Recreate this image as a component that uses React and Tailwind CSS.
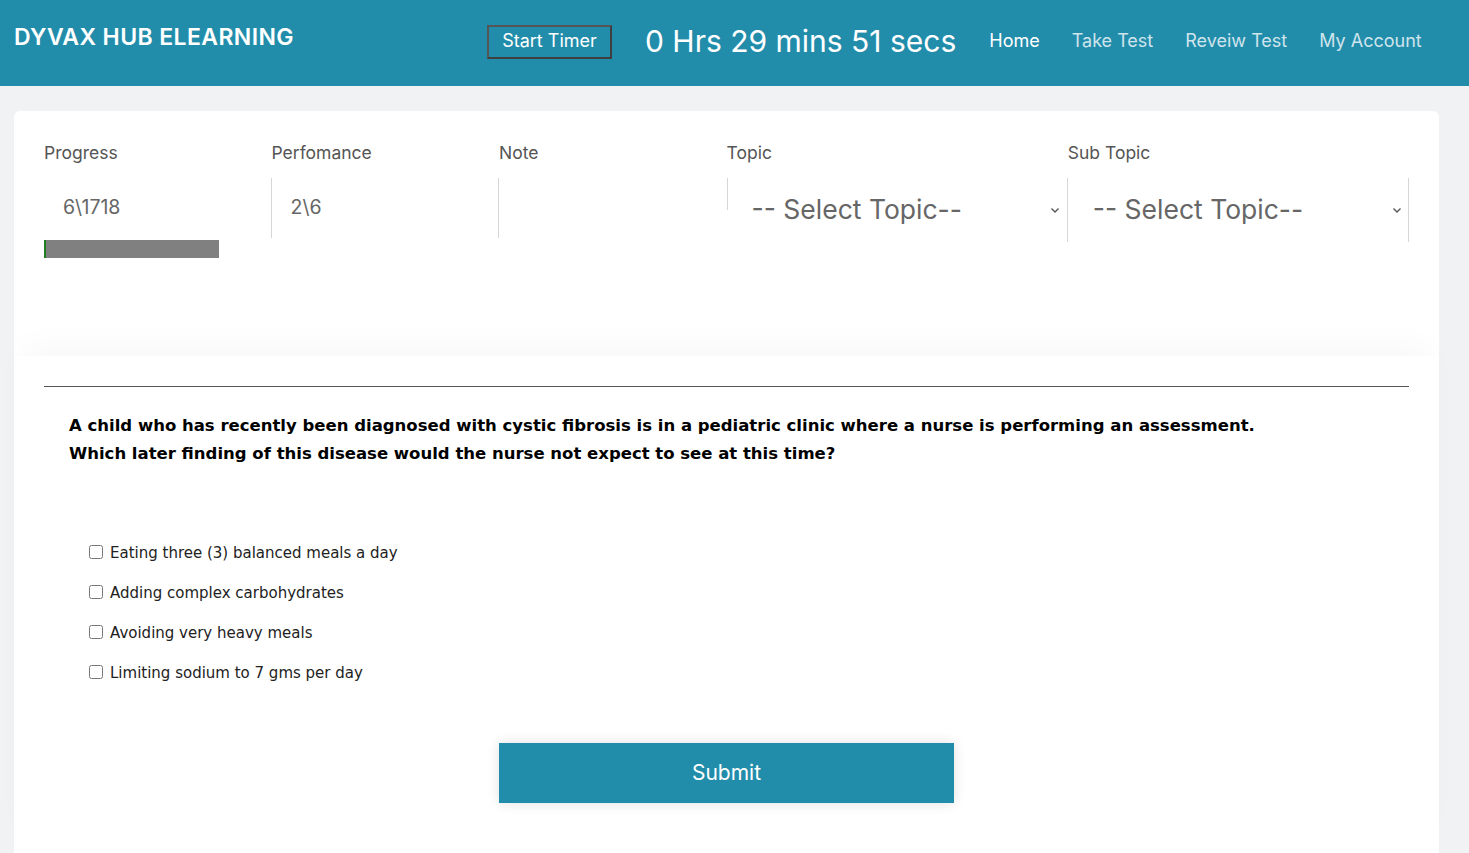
import React from "react";

const OPTIONS = [
  "Eating three (3) balanced meals a day",
  "Adding complex carbohydrates",
  "Avoiding very heavy meals",
  "Limiting sodium to 7 gms per day",
];

function Chevron() {
  return (
    <svg width="10" height="10" viewBox="0 0 10 10" className="shrink-0">
      <path d="M1.5 3.5 L5 7 L8.5 3.5" fill="none" stroke="#555" strokeWidth="1.4" />
    </svg>
  );
}

export default function App() {
  return (
    <div className="min-h-screen bg-[#f1f2f4] font-['Inter','Noto_Sans',sans-serif]">
      {/* Header */}
      <header className="h-[86px] bg-[#228dab] flex items-start text-white">
        <div className="pl-[14px] pt-[20px] text-[23px] font-semibold tracking-[0.4px] w-[487px]">
          DYVAX HUB ELEARNING
        </div>
        <button className="mt-[25px] h-[34px] w-[125px] pb-[3px] border-2 border-[#3f3f3f] border-t-[#555] border-l-[#555] text-[18px] leading-[24px] text-white">
          Start Timer
        </button>
        <div className="ml-[33px] mt-[21px] text-[30px] leading-[40px]">0 Hrs 29 mins 51 secs</div>
        <nav className="ml-[33px] mt-[27px] flex gap-[32px] text-[18px]">
          <span className="text-white">Home</span>
          <span className="text-[#cfe4ec]">Take Test</span>
          <span className="text-[#cfe4ec]">Reveiw Test</span>
          <span className="text-[#cfe4ec]">My Account</span>
        </nav>
      </header>

      <main className="px-[14px] pt-[25px] pr-[30px]">
        {/* Stats card */}
        <section className="bg-white rounded-t-md h-[245px] px-[30px] pt-[32px]">
          <div className="grid grid-cols-12 text-[#555]">
            <div className="col-span-2">
              <div className="text-[17.5px] leading-[20px]">Progress</div>
              <div className="h-[60px] mt-[15px] pl-[19px] flex items-center text-[19.5px] text-[#666]">6\1718</div>
              <div className="mt-[2px] w-[175px] h-[18px] bg-[#808080] border-l-2 border-[#1e7d1e]" />
            </div>
            <div className="col-span-2 -ml-[1px]">
              <div className="text-[17.5px] leading-[20px] pl-[1px]">Perfomance</div>
              <div className="h-[60px] mt-[15px] pl-[19px] flex items-center border-l border-[#d6d6d6] text-[19.5px] text-[#666]">2\6</div>
            </div>
            <div className="col-span-2 -ml-[1px]">
              <div className="text-[17.5px] leading-[20px] pl-[1px]">Note</div>
              <div className="h-[60px] mt-[15px] border-l border-[#d6d6d6]" />
            </div>
            <div className="col-span-3">
              <div className="text-[17.5px] leading-[20px]">Topic</div>
              <div className="relative h-[64px] mt-[15px] pl-[25px] pr-[8px] flex items-center justify-between text-[26.5px] text-[#666]">
                <span className="absolute left-0 top-0 h-[32px] border-l border-[#d6d6d6]" />
                <span>-- Select Topic--</span>
                <Chevron />
              </div>
            </div>
            <div className="col-span-3 -ml-[1px]">
              <div className="text-[17.5px] leading-[20px] pl-[1px]">Sub Topic</div>
              <div className="h-[64px] mt-[15px] pl-[25px] pr-[6px] flex items-center justify-between border-x border-[#d6d6d6] text-[26.5px] text-[#666]">
                <span>-- Select Topic--</span>
                <Chevron />
              </div>
            </div>
          </div>
        </section>

        {/* Question card */}
        <section className="bg-white h-[497px] px-[30px] pt-[30px] shadow-[0_-20px_30px_-10px_rgba(0,0,0,0.03)]">
          <div className="border-t border-[#555]" />
          <p className="mt-[25px] px-[25px] text-[16.5px] leading-[28px] font-bold text-black font-['DejaVu_Sans',Verdana,sans-serif]">
            A child who has recently been diagnosed with cystic fibrosis is in a pediatric clinic where a nurse is performing an assessment.
            <br />
            Which later finding of this disease would the nurse not expect to see at this time?
          </p>
          <div className="mt-[76px] pl-[45px] flex flex-col gap-[21px] font-['DejaVu_Sans',Verdana,sans-serif] text-[15px] text-[#222]">
            {OPTIONS.map((o) => (
              <label key={o} className="flex items-center h-[19px]">
                <input type="checkbox" className="w-[14px] h-[14px] mr-[7px] -mt-[4px]" />
                <span>{o}</span>
              </label>
            ))}
          </div>
          <div className="grid grid-cols-3 mt-[60px]">
            <button className="col-start-2 h-[60px] bg-[#228dab] text-white text-[21px] shadow-[0_0_12px_rgba(0,0,0,0.12)]">
              Submit
            </button>
          </div>
        </section>
      </main>
    </div>
  );
}
